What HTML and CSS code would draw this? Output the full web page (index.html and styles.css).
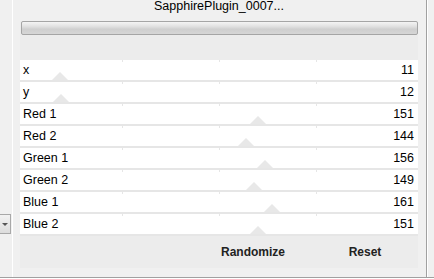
FILE: index.html
```html
<!DOCTYPE html>
<html>
<head>
<meta charset="utf-8">
<link rel="stylesheet" href="styles.css">
</head>
<body>
<div class="window">
  <div class="left-strip">
    <div class="combo-btn"><span class="arrow"></span></div>
  </div>
  <div class="panel">
    <div class="title">SapphirePlugin_0007...</div>
    <div class="progress"></div>
    <div class="rows">
      <div class="row"><span class="thumb" style="left:32px"></span><span class="label">x</span><span class="value">11</span></div>
      <div class="row"><span class="thumb" style="left:33px"></span><span class="label">y</span><span class="value">12</span></div>
      <div class="row"><span class="thumb" style="left:230px"></span><span class="label">Red 1</span><span class="value">151</span></div>
      <div class="row"><span class="thumb" style="left:218px"></span><span class="label">Red 2</span><span class="value">144</span></div>
      <div class="row"><span class="thumb" style="left:237px"></span><span class="label">Green 1</span><span class="value">156</span></div>
      <div class="row"><span class="thumb" style="left:226px"></span><span class="label">Green 2</span><span class="value">149</span></div>
      <div class="row"><span class="thumb" style="left:244px"></span><span class="label">Blue 1</span><span class="value">161</span></div>
      <div class="row"><span class="thumb" style="left:230px"></span><span class="label">Blue 2</span><span class="value">151</span></div>
    </div>
    <div class="actions">
      <div class="btn">Randomize</div>
      <div class="btn">Reset</div>
    </div>
  </div>
  <div class="right-gap"></div>
  <div class="right-edge"></div>
</div>
</body>
</html>
```

FILE: styles.css
```css
html, body {
  margin: 0;
  padding: 0;
}
body {
  width: 434px;
  height: 279px;
  overflow: hidden;
  background: #f0f0f0;
  font-family: "Liberation Sans", Arial, sans-serif;
  font-size: 12.5px;
  color: #000;
}
.window {
  display: flex;
  height: 277px;
  border-bottom: 1px solid #a0a0a0;
  box-shadow: 0 1px 0 #ffffff;
}
.left-strip {
  width: 13px;
  border-right: 1px solid #ffffff;
  display: flex;
  flex-direction: column;
  padding-top: 214px;
  box-sizing: border-box;
  margin-right: 7px;
}
.combo-btn {
  width: 10px;
  height: 18px;
  border: 1px solid #a8a8a8;
  border-left: none;
  background: linear-gradient(#f2f2f2, #dcdcdc);
  display: flex;
  align-items: center;
  justify-content: center;
}
.arrow {
  width: 0;
  height: 0;
  border-left: 3px solid transparent;
  border-right: 3px solid transparent;
  border-top: 3px solid #555;
}
.panel {
  width: 398px;
  height: 268px;
  background: #ececec;
  display: flex;
  flex-direction: column;
}
.title {
  height: 22px;
  line-height: 14px;
  margin-top: -1px;
  text-align: center;
  color: #000;
  background: #f0f0f0;
}
.progress {
  margin-left: 1px;
  width: 397px;
  height: 14px;
  box-sizing: border-box;
  border: 1px solid #a5a5a5;
  border-radius: 2px;
  background: linear-gradient(#f4f4f4 0%, #e2e2e2 35%, #cfcfcf 60%, #d6d6d6 100%);
}
.rows {
  margin-top: 25px;
  display: flex;
  flex-direction: column;
  gap: 2px;
  background: #e6e6e6;
  padding-bottom: 2px;
}
.row {
  position: relative;
  height: 20px;
  line-height: 20px;
  display: flex;
  justify-content: space-between;
  padding: 0 4px 0 3px;
  background:
    linear-gradient(#e6e6e6, #e6e6e6) 102px 0 / 1px 2px no-repeat,
    linear-gradient(#e6e6e6, #e6e6e6) 199px 0 / 1px 2px no-repeat,
    linear-gradient(#e6e6e6, #e6e6e6) 296px 0 / 1px 2px no-repeat,
    #ffffff;
}
.thumb {
  position: absolute;
  bottom: 0;
  width: 0;
  height: 0;
  border-left: 8px solid transparent;
  border-right: 8px solid transparent;
  border-bottom: 8px solid #e8e8e8;
}
.label, .value {
  position: relative;
}
.actions {
  height: 32px;
  display: flex;
  justify-content: flex-end;
  align-items: center;
  gap: 12px;
  padding-right: 3px;
  background: #ececec;
  font-size: 12px;
}
.btn {
  width: 100px;
  text-align: center;
  font-weight: bold;
  color: #222;
}
.right-gap {
  width: 8px;
}
.right-edge {
  width: 1px;
  background: #a0a0a0;
  border-right: 1px solid #ffffff;
  height: 277px;
}
```
